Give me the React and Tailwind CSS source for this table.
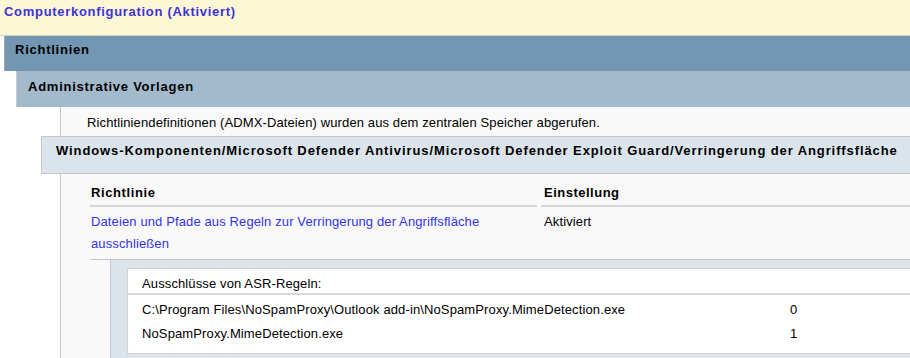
import React from 'react';

const exclusions = [
  { path: 'C:\\Program Files\\NoSpamProxy\\Outlook add-in\\NoSpamProxy.MimeDetection.exe', value: '0' },
  { path: 'NoSpamProxy.MimeDetection.exe', value: '1' },
];

const App = () => {
  return (
    <div className="w-[910px] h-[358px] overflow-hidden bg-white text-[13px] leading-[16px] tracking-[0.12px] text-black font-['Liberation_Sans',Arial,sans-serif]">
      <div className="h-[36px] bg-[#fef7d6] border-b border-[#d6d0b6] pl-[4px] pt-[4px] font-bold tracking-[0.7px] text-[#3b34d8]">
        Computerkonfiguration (Aktiviert)
      </div>
      <div className="ml-[4px]">
        <div className="h-[35px] bg-[#7397b3] border-l border-[#9aa6b0] pl-[10px] pt-[6px] font-bold tracking-[0.75px]">Richtlinien</div>
        <div className="ml-[12px]">
          <div className="h-[36px] bg-[#a3b9cc] border-l border-[#c2cad2] pl-[11px] pt-[8px] font-bold tracking-[0.75px]">Administrative Vorlagen</div>
          <div className="ml-[44px] border-l border-[#c6c6c6] bg-[#f9f9f9]">
            <div className="h-[29px] pl-[26px] pt-[8px]">
              Richtliniendefinitionen (ADMX-Dateien) wurden aus dem zentralen Speicher abgerufen.
            </div>
            <div className="-ml-[20px] h-[38px] bg-[#dae4ea] border border-r-0 border-[#c4c8cc] pl-[14px] pt-[6px] font-bold tracking-[0.9px] whitespace-nowrap">
              Windows-Komponenten/Microsoft Defender Antivirus/Microsoft Defender Exploit Guard/Verringerung der Angriffsfläche
            </div>
            <div className="pl-[29px] pt-[11px]">
              <div className="flex">
                <div className="w-[447px] border-b-2 border-[#d6d6d6] pl-[1px] pb-[4px] font-bold tracking-[0.6px]">Richtlinie</div>
                <div className="flex-1 ml-[4px] border-b-2 border-[#d6d6d6] pl-[3px] pb-[4px] font-bold tracking-[0.5px]">Einstellung</div>
              </div>
              <div className="flex h-[53px] pt-[7px] border-b border-[#c6c6c6]">
                <div className="w-[447px] pl-[1px] leading-[22px] -mt-[3px] text-[#3333ee]">
                  Dateien und Pfade aus Regeln zur Verringerung der Angriffsfläche
                  <br />
                  ausschließen
                </div>
                <div className="flex-1 ml-[4px] pl-[3px]">Aktiviert</div>
              </div>
              <div className="ml-[20px] bg-[#dbe4ea] border-l border-[#c8ccd0] pl-[16px] pt-[8px] h-[120px]">
                <div className="bg-white border border-r-0 border-[#cfd3d6]">
                  <div className="h-[26px] pl-[14px] pt-[7px] border-b-2 border-[#d8d8d8]">Ausschlüsse von ASR-Regeln:</div>
                  <div className="pt-[7px] pb-[3px]">
                    {exclusions.map(row => (
                      <div key={row.value} className="flex h-[24px]">
                        <div className="w-[650px] pl-[14px]">{row.path}</div>
                        <div className="flex-1 pl-[12px]">{row.value}</div>
                      </div>
                    ))}
                  </div>
                </div>
              </div>
            </div>
          </div>
        </div>
      </div>
    </div>
  );
};

export default App;
